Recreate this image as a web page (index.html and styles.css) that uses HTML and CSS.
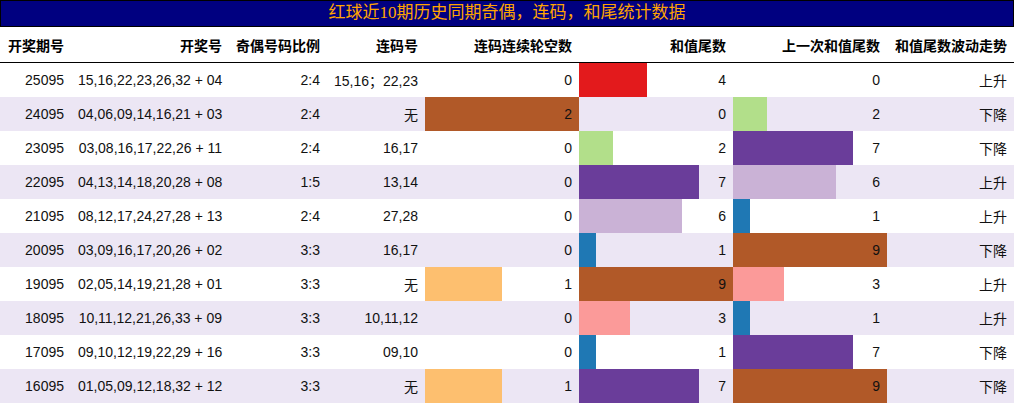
FILE: index.html
```html
<!DOCTYPE html>
<html lang="zh">
<head>
<meta charset="utf-8">
<title>红球近10期历史同期奇偶，连码，和尾统计数据</title>
<link rel="stylesheet" href="styles.css">
</head>
<body>
<div class="banner">红球近10期历史同期奇偶，连码，和尾统计数据</div>
<table class="stats">
  <colgroup>
    <col class="w1"><col class="w2"><col class="w3"><col class="w4">
    <col class="wb"><col class="wb"><col class="wb"><col class="w8">
  </colgroup>
  <thead>
    <tr>
      <th>开奖期号</th><th>开奖号</th><th>奇偶号码比例</th><th>连码号</th>
      <th>连码连续轮空数</th><th>和值尾数</th><th>上一次和值尾数</th><th>和值尾数波动走势</th>
    </tr>
  </thead>
  <tbody>
    <tr><td>25095</td><td>15,16,22,23,26,32 + 04</td><td>2:4</td><td>15,16；22,23</td>
      <td>0</td><td class="bar c4" style="--w:44.44%">4</td><td>0</td><td>上升</td></tr>
    <tr><td>24095</td><td>04,06,09,14,16,21 + 03</td><td>2:4</td><td>无</td>
      <td class="bar c9" style="--w:100%">2</td><td>0</td><td class="bar c2" style="--w:22.22%">2</td><td>下降</td></tr>
    <tr><td>23095</td><td>03,08,16,17,22,26 + 11</td><td>2:4</td><td>16,17</td>
      <td>0</td><td class="bar c2" style="--w:22.22%">2</td><td class="bar c7" style="--w:77.78%">7</td><td>下降</td></tr>
    <tr><td>22095</td><td>04,13,14,18,20,28 + 08</td><td>1:5</td><td>13,14</td>
      <td>0</td><td class="bar c7" style="--w:77.78%">7</td><td class="bar c6" style="--w:66.67%">6</td><td>上升</td></tr>
    <tr><td>21095</td><td>08,12,17,24,27,28 + 13</td><td>2:4</td><td>27,28</td>
      <td>0</td><td class="bar c6" style="--w:66.67%">6</td><td class="bar c1" style="--w:11.11%">1</td><td>上升</td></tr>
    <tr><td>20095</td><td>03,09,16,17,20,26 + 02</td><td>3:3</td><td>16,17</td>
      <td>0</td><td class="bar c1" style="--w:11.11%">1</td><td class="bar c9" style="--w:100%">9</td><td>下降</td></tr>
    <tr><td>19095</td><td>02,05,14,19,21,28 + 01</td><td>3:3</td><td>无</td>
      <td class="bar c5" style="--w:50%">1</td><td class="bar c9" style="--w:100%">9</td><td class="bar c3" style="--w:33.33%">3</td><td>上升</td></tr>
    <tr><td>18095</td><td>10,11,12,21,26,33 + 09</td><td>3:3</td><td>10,11,12</td>
      <td>0</td><td class="bar c3" style="--w:33.33%">3</td><td class="bar c1" style="--w:11.11%">1</td><td>上升</td></tr>
    <tr><td>17095</td><td>09,10,12,19,22,29 + 16</td><td>3:3</td><td>09,10</td>
      <td>0</td><td class="bar c1" style="--w:11.11%">1</td><td class="bar c7" style="--w:77.78%">7</td><td>下降</td></tr>
    <tr><td>16095</td><td>01,05,09,12,18,32 + 12</td><td>3:3</td><td>无</td>
      <td class="bar c5" style="--w:50%">1</td><td class="bar c7" style="--w:77.78%">7</td><td class="bar c9" style="--w:100%">9</td><td>下降</td></tr>
  </tbody>
</table>
</body>
</html>
```
FILE: styles.css
```css
html, body {
  margin: 0;
  padding: 0;
  background: #fff;
}
body {
  font-family: "Liberation Sans", "Noto Sans CJK SC", sans-serif;
  font-size: 14px;
  color: #111;
}
.banner {
  box-sizing: border-box;
  width: 1014px;
  height: 27px;
  background: #000080;
  border: 1px solid #000;
  color: #ffa500;
  font-family: "Liberation Serif", "Noto Sans CJK SC", serif;
  font-size: 17px;
  line-height: 24px;
  text-align: center;
}
.stats {
  width: 1014px;
  border-collapse: collapse;
  table-layout: fixed;
}
.w1 { width: 71px; }
.w2 { width: 158px; }
.w3 { width: 98px; }
.w4 { width: 98px; }
.wb { width: 154px; }
.w8 { width: 127px; }
.stats th {
  height: 35px;
  padding: 0 7px;
  font-weight: bold;
  text-align: right;
  color: #000;
  border-bottom: 1px solid #000;
  white-space: nowrap;
}
.stats th:first-child {
  text-align: left;
  padding-left: 8px;
}
.stats td {
  height: 34px;
  padding: 0 7px;
  text-align: right;
  white-space: nowrap;
}
.stats tbody tr:nth-child(even) {
  background: #ece6f4;
}
.bar {
  background: linear-gradient(90deg, var(--c) var(--w), transparent var(--w));
}
.c1 { --c: #1f78b4; }
.c2 { --c: #b2df8a; }
.c3 { --c: #fb9a99; }
.c4 { --c: #e31a1c; }
.c5 { --c: #fdbf6f; }
.c6 { --c: #cab2d6; }
.c7 { --c: #6a3d9a; }
.c9 { --c: #b15928; }
```
